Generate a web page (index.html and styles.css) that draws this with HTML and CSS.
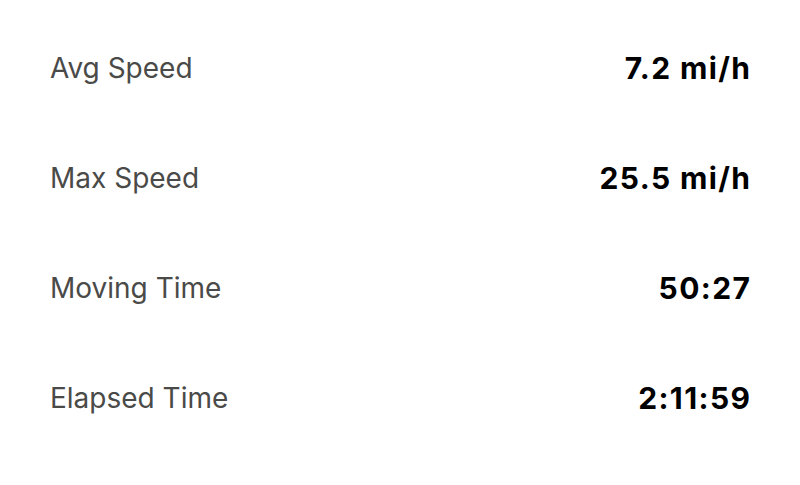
FILE: index.html
```html
<!DOCTYPE html>
<html>
<head>
<meta charset="utf-8">
<link rel="stylesheet" href="styles.css">
</head>
<body>
<div class="stats">
  <div class="row"><span class="label">Avg Speed</span><span class="value">7.2 mi/h</span></div>
  <div class="row"><span class="label">Max Speed</span><span class="value">25.5 mi/h</span></div>
  <div class="row"><span class="label">Moving Time</span><span class="value">50:27</span></div>
  <div class="row"><span class="label">Elapsed Time</span><span class="value">2:11:59</span></div>
</div>
</body>
</html>
```
FILE: styles.css
```css
html, body {
  margin: 0;
  padding: 0;
  background: #ffffff;
}
body {
  font-family: Inter, "Liberation Sans", sans-serif;
}
.stats {
  display: flex;
  flex-direction: column;
  padding: 13px 50px 0 50px;
}
.row {
  display: flex;
  justify-content: space-between;
  align-items: center;
  height: 110px;
}
.label {
  font-size: 28px;
  color: #4a4a48;
  font-weight: 400;
}
.value {
  font-size: 30px;
  font-weight: 700;
  letter-spacing: 1.4px;
  margin-right: -1.4px;
  color: #000;
}
```
